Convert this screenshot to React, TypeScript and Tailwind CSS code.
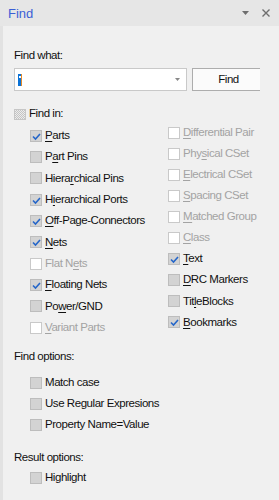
import React from "react";

type State = "checked" | "unchecked" | "disabled";

function Box({ state }: { state: State }) {
  if (state === "disabled") {
    return <span className="block w-[12px] h-[12px] shrink-0 border border-[#c9c9c9] bg-white" />;
  }
  return (
    <span className="relative block w-[12px] h-[12px] shrink-0 border border-[#bdbdbd] bg-[#d3d3d3]">
      {state === "checked" && (
        <svg className="absolute left-[1px] top-[1px]" width="9" height="9" viewBox="0 0 9 9">
          <path d="M1 4.5 L3.5 7 L8 2" fill="none" stroke="#2566c9" strokeWidth="1.6" />
        </svg>
      )}
    </span>
  );
}

function Label({ text, u }: { text: string; u: number }) {
  if (u < 0) return <>{text}</>;
  return (
    <>
      {text.slice(0, u)}
      <u className="underline-offset-[2px]">{text[u]}</u>
      {text.slice(u + 1)}
    </>
  );
}

function Row({ text, u, state, h }: { text: string; u: number; state: State; h: string }) {
  return (
    <div className={`flex items-center gap-[3px] ${h}`}>
      <Box state={state} />
      <span className={state === "disabled" ? "text-[#a3a3a3]" : "text-[#111]"}>
        <Label text={text} u={u} />
      </span>
    </div>
  );
}

const left: [string, number, State][] = [
  ["Parts", 0, "checked"],
  ["Part Pins", 1, "unchecked"],
  ["Hierarchical Pins", 5, "unchecked"],
  ["Hierarchical Ports", 1, "checked"],
  ["Off-Page-Connectors", 0, "checked"],
  ["Nets", 0, "checked"],
  ["Flat Nets", 6, "disabled"],
  ["Floating Nets", 0, "checked"],
  ["Power/GND", 2, "unchecked"],
  ["Variant Parts", 0, "disabled"],
];

const right: [string, number, State][] = [
  ["Differential Pair", 0, "disabled"],
  ["Physical CSet", 3, "disabled"],
  ["Electrical CSet", 0, "disabled"],
  ["Spacing CSet", 0, "disabled"],
  ["Matched Group", 0, "disabled"],
  ["Class", 0, "disabled"],
  ["Text", 0, "checked"],
  ["DRC Markers", 0, "unchecked"],
  ["TitleBlocks", 3, "unchecked"],
  ["Bookmarks", 0, "checked"],
];

export default function App() {
  return (
    <div
      className="w-[279px] h-[500px] overflow-hidden bg-[#f0f0f0] flex flex-col text-[11.5px] tracking-[-0.45px] leading-none"
      style={{ fontFamily: '"Liberation Sans", Arial, sans-serif' }}
    >
      <div className="h-[26px] shrink-0 bg-[#e6e6e6] flex items-center pl-[8px] pr-[9px]">
        <span className="text-[13px] tracking-normal text-[#3b5fd6]">Find</span>
        <div className="ml-auto flex items-center gap-[13px]">
          <svg width="7" height="4" viewBox="0 0 7 4">
            <path d="M0 0 H7 L3.5 4 Z" fill="#6e6e6e" />
          </svg>
          <svg width="8" height="8" viewBox="0 0 8 8">
            <path d="M0.5 0.5 L7.5 7.5 M7.5 0.5 L0.5 7.5" stroke="#6e6e6e" strokeWidth="1.4" />
          </svg>
        </div>
      </div>
      <div className="flex-1 border-l-[3px] border-[#e2e2e2] pl-[11px] pt-[22px] flex flex-col">
        <div className="h-[16px] flex items-center text-[#111]">Find what:</div>
        <div className="mt-[4px] flex items-stretch h-[23px]">
          <div className="w-[173px] border border-[#c9c9c9] bg-white flex items-center pl-[3px] pr-[6px]">
            <span className="w-[4px] h-[12px] bg-[#0a72d6] border-r border-[#e38a2b] flex items-start justify-center">
              <span className="mt-[2px] w-[2px] h-[2px] bg-white" />
            </span>
            <svg className="ml-auto" width="5" height="3" viewBox="0 0 5 3">
              <path d="M0 0 H5 L2.5 3 Z" fill="#888" />
            </svg>
          </div>
          <div className="ml-[5px] w-[68px] border border-r-0 border-[#adadad] bg-[#fbfbfb] flex items-center justify-center pl-[4px] text-[#111]">
            Find
          </div>
        </div>
        <div className="mt-[13px] h-[20px] flex items-center gap-[3px]">
          <span className="block w-[12px] h-[11px] border border-[#c6c6c6] bg-[repeating-conic-gradient(#c4c4c4_0%_25%,#ececec_0%_50%)] bg-[length:2px_2px]" />
          <span className="text-[#111]">Find in:</span>
        </div>
        <div className="flex">
          <div className="w-[154px] pl-[16px] pt-[1px]">
            {left.map(([t, u, s]) => (
              <Row key={t} text={t} u={u} state={s} h="h-[21.33px]" />
            ))}
          </div>
          <div className="-mt-[2px]">
            {right.map(([t, u, s]) => (
              <Row key={t} text={t} u={u} state={s} h="h-[21.1px]" />
            ))}
          </div>
        </div>
        <div className="mt-[8px] h-[20px] flex items-center text-[#111]">Find options:</div>
        <div className="mt-[6px] pl-[16px]">
          <Row text="Match case" u={-1} state="unchecked" h="h-[21px]" />
          <Row text="Use Regular Expresions" u={-1} state="unchecked" h="h-[21px]" />
          <Row text="Property Name=Value" u={-1} state="unchecked" h="h-[21px]" />
        </div>
        <div className="mt-[12px] h-[20px] flex items-center text-[#111]">Result options:</div>
        <div className="pl-[16px]">
          <Row text="Highlight" u={-1} state="unchecked" h="h-[21px]" />
        </div>
      </div>
    </div>
  );
}
